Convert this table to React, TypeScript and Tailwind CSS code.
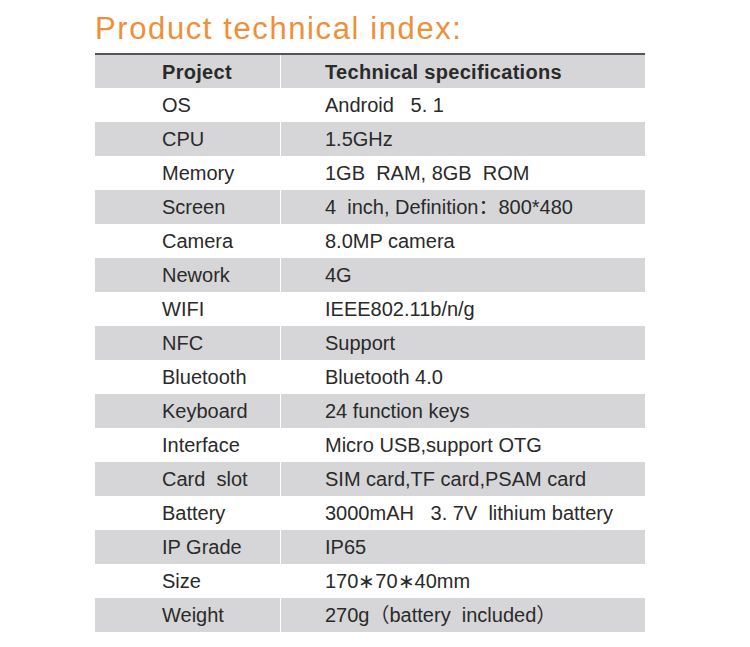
const rows: [string, string][] = [
  ["OS", "Android   5. 1"],
  ["CPU", "1.5GHz"],
  ["Memory", "1GB  RAM, 8GB  ROM"],
  ["Screen", "4  inch, Definition：800*480"],
  ["Camera", "8.0MP camera"],
  ["Nework", "4G"],
  ["WIFI", "IEEE802.11b/n/g"],
  ["NFC", "Support"],
  ["Bluetooth", "Bluetooth 4.0"],
  ["Keyboard", "24 function keys"],
  ["Interface", "Micro USB,support OTG"],
  ["Card  slot", "SIM card,TF card,PSAM card"],
  ["Battery", "3000mAH   3. 7V  lithium battery"],
  ["IP Grade", "IP65"],
  ["Size", "170∗70∗40mm"],
  ["Weight", "270g（battery  included）"],
];

export default function App() {
  return (
    <div className="w-[750px] min-h-[647px] bg-white font-['Liberation_Sans','Noto_Sans_CJK_SC',sans-serif] text-[#2a2a2a]">
      <h1 className="pl-[95px] pt-[13px] text-[31px] leading-none tracking-[1.6px] text-[#ee8f3a]">
        Product technical index:
      </h1>
      <div className="ml-[95px] mt-[9px] w-[550px] border-t-2 border-[#555]">
        {/* header */}
        <div className="grid h-[33px] grid-cols-[185px_364px] gap-x-px text-[20px] font-bold tracking-[0.3px]">
          <div className="flex items-center bg-[#d6d6d8] pl-[67px]">Project</div>
          <div className="flex items-center bg-[#d6d6d8] pl-[44px]">Technical specifications</div>
        </div>
        {rows.map(([name, value], i) => (
          <div key={name} className="grid h-[34px] grid-cols-[185px_364px] gap-x-px text-[20px]">
            <div className={`flex items-center whitespace-pre pl-[67px] ${i % 2 === 1 ? "bg-[#d6d6d8]" : ""}`}>
              {name}
            </div>
            <div className={`flex items-center whitespace-pre pl-[44px] ${i % 2 === 1 ? "bg-[#d6d6d8]" : ""}`}>
              {value}
            </div>
          </div>
        ))}
      </div>
    </div>
  );
}
